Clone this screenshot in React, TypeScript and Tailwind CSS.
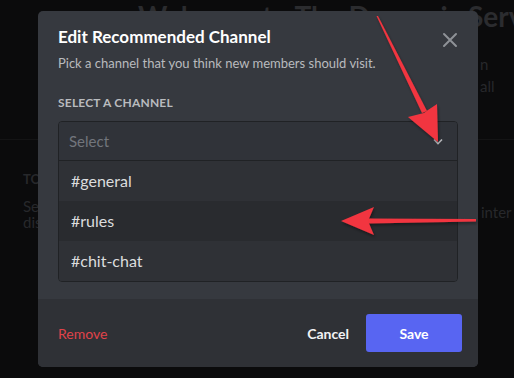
import React from "react";

export default function App() {
  const font = { fontFamily: '"Lato", "Noto Sans", "Liberation Sans", sans-serif' };
  return (
    <div className="relative w-[514px] h-[378px] overflow-hidden bg-[#0b0b0c]" style={font}>
      {/* Background page (dimmed) */}
      <div className="relative z-0 flex flex-col w-full h-full text-[#27282b]">
        <div className="h-[28px] pl-[138px] -mt-[1px] whitespace-nowrap text-[28px] font-bold leading-[34px] overflow-hidden text-[#2b2c2f]">
          Welcome to The Dragonic Server
        </div>
        <div className="flex justify-end pt-[26px]">
          <div className="w-[34px] flex flex-col text-[15px] leading-[22px]">
            <span>n</span>
            <span>all</span>
          </div>
        </div>
        <div className="mt-[42px] h-px w-[520px] bg-[#141415]" />
        <div className="pt-[30px] pl-[23px] text-[13px] font-bold leading-[18px]">TOPICS</div>
        <div className="flex pl-[23px] pt-[10px] text-[15px] leading-[16px]">
          <div className="flex flex-col">
            <span>Select topics that best describe your server</span>
            <span>discussions</span>
          </div>
        </div>
        <div className="absolute left-[481px] top-[201px] w-[33px] overflow-hidden text-[15px] whitespace-nowrap">inter</div>
      </div>

      {/* Modal */}
      <div className="absolute z-10 left-[38px] top-[11px] w-[440px] h-[356px] rounded-[5px] overflow-hidden bg-[#36393f] flex flex-col">
        <div className="flex-1 px-5 pt-[15px] flex flex-col">
          <div className="flex items-start justify-between">
            <div className="text-[17px] font-bold leading-[22px] text-white">Edit Recommended Channel</div>
            <svg width="16" height="16" viewBox="0 0 16 16" className="mt-[6px]">
              <path d="M2 2 L14 14 M14 2 L2 14" stroke="#8e9297" strokeWidth="2" strokeLinecap="round" />
            </svg>
          </div>
          <div className="mt-[6px] text-[13px] leading-[18px] text-[#b9bbbe]">
            Pick a channel that you think new members should visit.
          </div>
          <div className="mt-[23px] text-[12px] font-bold leading-[16px] tracking-[0.2px] text-[#b9bbbe]">
            SELECT A CHANNEL
          </div>
          <div className="mt-[10px] rounded-[4px] border border-[#202225] overflow-hidden">
            <div className="h-[39px] flex items-center justify-between pl-[10px] pr-[14px] bg-[#303339] border-b border-[#202225]">
              <span className="text-[15px] text-[#72767d]">Select</span>
              <svg width="10" height="7" viewBox="0 0 10 7">
                <path d="M1 1.5 L5 5.5 L9 1.5" stroke="#b9bbbe" strokeWidth="1.6" fill="none" />
              </svg>
            </div>
            <div className="flex flex-col bg-[#2f3136]">
              <div className="h-[40px] flex items-center pl-[12px] text-[16px] text-[#dcddde]">#general</div>
              <div className="h-[40px] flex items-center pl-[12px] text-[16px] text-[#dcddde] bg-[#292b2f]">#rules</div>
              <div className="h-[40px] flex items-center pl-[12px] text-[16px] text-[#dcddde]">#chit-chat</div>
            </div>
          </div>
        </div>
        <div className="h-[68px] bg-[#2f3136] flex items-center pl-5 pr-4">
          <span className="text-[14px] text-[#e0434a]">Remove</span>
          <div className="flex-1" />
          <span className="text-[14px] font-bold text-[#f2f3f5] mr-[17px]">Cancel</span>
          <div className="w-[96px] h-[38px] rounded-[3px] bg-[#5865f2] flex items-center justify-center text-[14px] font-bold text-white">
            Save
          </div>
        </div>
      </div>

      {/* Arrows overlay */}
      <svg className="absolute z-20 left-0 top-0 pointer-events-none" width="514" height="378" viewBox="0 0 514 378">
        <defs>
          <filter id="sh" x="-20%" y="-20%" width="140%" height="140%">
            <feDropShadow dx="1" dy="2" stdDeviation="1.5" floodColor="#000" floodOpacity="0.4" />
          </filter>
        </defs>
        <g filter="url(#sh)" fill="#f2353f">
          <polygon points="376.5,16 378,16 427,111 422,113" />
          <polygon points="438,142 408,117 424,113 428,110 437,104" />
          <polygon points="476,219 476,221.5 368,223.5 368,218.5" />
          <polygon points="341,221 374,207 368,221 374,235" />
        </g>
      </svg>
    </div>
  );
}
